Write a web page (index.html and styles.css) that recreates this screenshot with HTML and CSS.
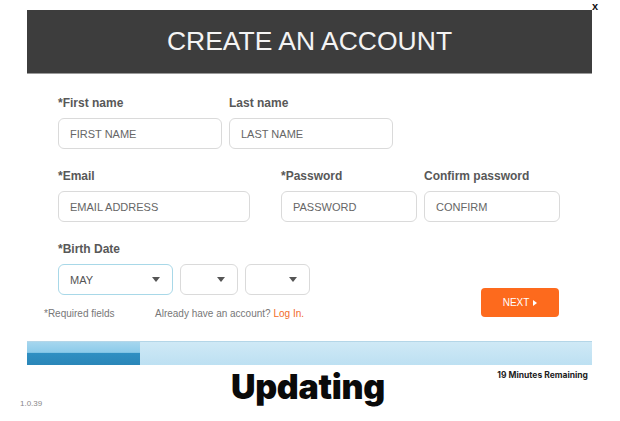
FILE: index.html
```html
<!DOCTYPE html>
<html lang="en">
  <head>
    <meta charset="UTF-8" />
    <meta name="viewport" content="width=device-width, initial-scale=1.0" />
    <title>Create an Account</title>
    <link rel="stylesheet" href="styles.css">
  </head>
  <body>
    <a href="#" class="close">x</a>

    <!-- Account dialog -->
    <div class="dialog">
      <div class="header">CREATE AN ACCOUNT</div>

      <div class="form">
        <div class="row">
          <div class="field w-first">
            <label>*First name</label>
            <div class="input">FIRST NAME</div>
          </div>
          <div class="field w-first">
            <label>Last name</label>
            <div class="input">LAST NAME</div>
          </div>
        </div>

        <div class="row">
          <div class="field w-email">
            <label>*Email</label>
            <div class="input">EMAIL ADDRESS</div>
          </div>
          <div class="field w-pass">
            <label>*Password</label>
            <div class="input">PASSWORD</div>
          </div>
          <div class="field w-pass">
            <label>Confirm password</label>
            <div class="input">CONFIRM</div>
          </div>
        </div>

        <div class="bottom">
          <div class="bottom-left">
            <div class="field">
              <label>*Birth Date</label>
              <div class="selects">
                <div class="select active w-month">MAY<span class="caret"></span></div>
                <div class="select w-day"><span class="caret"></span></div>
                <div class="select w-year"><span class="caret"></span></div>
              </div>
            </div>
            <div class="notes">
              <span class="required">*Required fields</span>
              <span class="login">Already have an account? <a href="#">Log In.</a></span>
            </div>
          </div>
          <button class="next">NEXT <span class="arrow"></span></button>
        </div>
      </div>
    </div>

    <!-- Update status -->
    <div class="footer">
      <div class="progress">
        <div class="progress-fill" style="width: 20%"></div>
      </div>
      <div class="status">
        <span class="version">1.0.39</span>
        <span class="updating">Updating</span>
        <span class="remaining">19 Minutes Remaining</span>
      </div>
    </div>
  </body>
</html>
```

FILE: styles.css
```css
body {
  margin: 0;
  font-family: "Liberation Sans", Arial, sans-serif;
  background-color: #fff;
  color: #444;
}

.close {
  position: absolute;
  top: 0;
  left: 592px;
  font-size: 11px;
  font-weight: bold;
  color: #111;
  text-decoration: none;
}

/* Dialog */
.dialog {
  margin: 10px 0 0 27px;
  width: 565px;
}

.header {
  height: 63px;
  background-color: #3d3d3d;
  border-bottom: 1px solid #9a9a9a;
  color: #f4f4f4;
  font-size: 26.5px;
  display: flex;
  align-items: center;
  justify-content: center;
}

.form {
  padding: 22px 0 0 17px;
}

.row {
  display: flex;
  gap: 7px;
  padding-left: 14px;
  margin-bottom: 20px;
}

.w-email + .w-pass {
  margin-left: 24px;
}

.field label {
  display: block;
  font-size: 12px;
  line-height: 14px;
  font-weight: bold;
  color: #585858;
  margin-bottom: 8px;
}

.input {
  box-sizing: border-box;
  height: 31px;
  border: 1px solid #dadada;
  border-radius: 6px;
  padding-left: 11px;
  font-size: 11px;
  color: #666;
  display: flex;
  align-items: center;
}

.w-first { width: 164px; }
.w-email { width: 192px; }
.w-pass { width: 136px; }

/* Birth date and footer row */
.bottom {
  display: flex;
  justify-content: space-between;
  align-items: flex-end;
}

.bottom .field {
  padding-left: 14px;
}

.selects {
  display: flex;
  gap: 7px;
}

.select {
  box-sizing: border-box;
  height: 31px;
  border: 1px solid #dadada;
  border-radius: 6px;
  padding: 0 12px 0 11px;
  font-size: 11px;
  color: #555;
  display: flex;
  align-items: center;
  justify-content: flex-end;
}

.select.active {
  border-color: #a8d8e8;
  justify-content: space-between;
}

.w-month { width: 115px; }
.w-day { width: 58px; }
.w-year { width: 65px; }

.caret {
  width: 0;
  height: 0;
  border-left: 4px solid transparent;
  border-right: 4px solid transparent;
  border-top: 5px solid #555;
}

.notes {
  margin-top: 12px;
  font-size: 10px;
  line-height: 14px;
  color: #777;
  display: flex;
}

.required {
  width: 111px;
}

.login a {
  color: #f26b2a;
  text-decoration: none;
}

.next {
  width: 78px;
  height: 29px;
  margin: 0 33px 4px 0;
  background-color: #fd6a1d;
  border: none;
  border-radius: 4px;
  color: #fff;
  font-family: "Liberation Sans", Arial, sans-serif;
  font-size: 10px;
  display: flex;
  align-items: center;
  justify-content: center;
  gap: 4px;
  cursor: pointer;
}

.arrow {
  width: 0;
  height: 0;
  border-top: 3px solid transparent;
  border-bottom: 3px solid transparent;
  border-left: 4px solid #fff;
}

/* Update status */
.footer {
  padding: 20px 24px 0 20px;
}

.progress {
  height: 24px;
  margin: 0 4px 0 7px;
  background: linear-gradient(#cfe9f6, #bde0f2);
  border-top: 1px solid #b4d6e8;
  box-sizing: border-box;
}

.progress-fill {
  height: 100%;
  background: linear-gradient(#a6d6ee 0%, #8ccbea 45%, #2f8fc2 50%, #2a86b8 100%);
}

.status {
  display: grid;
  grid-template-columns: 1fr auto 1fr;
  align-items: start;
}

.version {
  align-self: end;
  font-size: 8px;
  line-height: 10px;
  color: #888;
}

.updating {
  font-family: Inter, "DejaVu Sans", sans-serif;
  font-weight: 900;
  font-size: 34px;
  line-height: 44px;
  color: #0a0a0a;
  letter-spacing: -0.3px;
}

.remaining {
  justify-self: end;
  margin: 5px 8px 0 0;
  font-family: Inter, "DejaVu Sans", sans-serif;
  font-weight: 700;
  font-size: 8.5px;
  color: #222;
}
```
